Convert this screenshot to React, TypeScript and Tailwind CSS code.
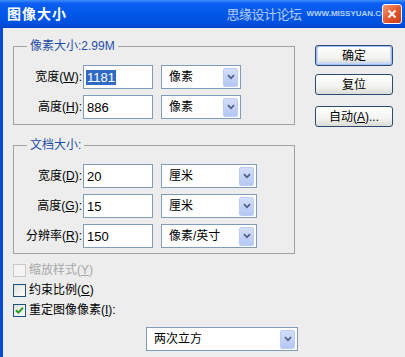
import React from 'react';

const font = "font-['Liberation_Sans','Noto_Sans_CJK_SC',sans-serif]";

interface SelectProps {
  value: string;
  width: string;
}

const Select: React.FC<SelectProps> = ({ value, width }) => (
  <div className={`${width} h-[24px] flex items-center bg-white border border-[#7f9db9] pl-[7px] pr-[2px]`}>
    <span className="flex-1 text-[12px] leading-none text-black">{value}</span>
    <span className="w-[15px] h-[19px] rounded-[2px] border border-[#bccdf5] bg-[linear-gradient(to_bottom,#d4defb,#b4c7f4)] flex items-center justify-center">
      <svg width="8" height="6" viewBox="0 0 8 6">
        <path d="M1 1.2 L4 4.3 L7 1.2" stroke="#4d6185" strokeWidth="1.7" fill="none" />
      </svg>
    </span>
  </div>
);

interface RowProps {
  name: string;
  hot: string;
  value: string;
  unit: string;
  selectWidth: string;
  selected?: boolean;
}

const Row: React.FC<RowProps> = ({ name, hot, value, unit, selectWidth, selected }) => (
  <div className="flex items-center h-[24px]">
    <div className="w-[68px] text-right text-[12px] text-black whitespace-nowrap">
      {name}(<u>{hot}</u>):
    </div>
    <div className="ml-px w-[70px] h-[24px] bg-white border border-[#7f9db9] flex items-center pl-[2px]">
      <span className={`text-[13px] leading-[15px] px-px ${selected ? 'bg-[#316ac5] text-white' : 'text-black'}`}>{value}</span>
    </div>
    <div className="ml-[8px]">
      <Select value={unit} width={selectWidth} />
    </div>
  </div>
);

const Group: React.FC<{ title: string; children: React.ReactNode; className?: string }> = ({ title, children, className }) => (
  <fieldset className={`border border-[#a3a3a3] pb-[5px] ${className ?? ''}`}>
    <legend className="ml-[13px] px-[3px] text-[12px] leading-[14px] text-[#1f4fa3]">{title}</legend>
    <div className="flex flex-col gap-[6px] pt-[12px]">{children}</div>
  </fieldset>
);

const Button: React.FC<{ children: React.ReactNode; primary?: boolean }> = ({ children, primary }) => (
  <div
    className={`w-[78px] h-[21px] rounded-[3px] border border-[#2b4a74] bg-[linear-gradient(to_bottom,#ffffff,#f3f3ef_60%,#dcdcd6)] flex items-center justify-center text-[12px] text-black ${
      primary ? 'shadow-[inset_0_0_0_1px_#9fc0f2,inset_0_-1px_0_2px_#c5d8f8]' : ''
    }`}
  >
    {children}
  </div>
);

const Check: React.FC<{ label: React.ReactNode; checked?: boolean; disabled?: boolean }> = ({ label, checked, disabled }) => (
  <div className="flex items-center h-[20px]">
    <span
      className={`w-[13px] h-[13px] border flex items-center justify-center ${
        disabled ? 'border-[#c9c9c9] bg-[#f4f4f4]' : 'border-[#1c5180] bg-[linear-gradient(135deg,#e0e0da,#ffffff)]'
      }`}
    >
      {checked && (
        <svg width="9" height="9" viewBox="0 0 9 9">
          <path d="M1 4.2 L3.4 6.6 L8 1.8" stroke="#21a121" strokeWidth="2" fill="none" />
        </svg>
      )}
    </span>
    <span className={`ml-[3px] text-[12px] ${disabled ? 'text-[#a8a8a8]' : 'text-black'}`}>{label}</span>
  </div>
);

export default function App() {
  return (
    <div className={`w-[405px] h-[357px] flex flex-col overflow-hidden bg-[#ededed] ${font}`}>
      {/* Title bar */}
      <div className="h-[28px] shrink-0 flex items-center bg-[linear-gradient(to_bottom,#3d8df7_0%,#0b5ff2_12%,#0057e8_50%,#0050de_85%,#0042c8_100%)]">
        <span className="ml-[7px] text-[14px] font-bold text-white tracking-[1px]">图像大小</span>
        <span className="ml-auto text-[13px] leading-none tracking-[-0.5px] text-[#a9c8fb] [text-shadow:0_0_1px_#3566c8]">思缘设计论坛</span>
        <span className="ml-[5px] text-[8px] font-bold leading-none text-[#b5d0ff] whitespace-nowrap">WWW.MISSYUAN.COM</span>
        <span className="shrink-0 ml-[-12px] mr-[3px] w-[20px] h-[20px] rounded-[3px] border border-white bg-[linear-gradient(135deg,#f29a76,#e2542a_55%,#c8401c)] flex items-center justify-center">
          <svg width="10" height="10" viewBox="0 0 10 10">
            <path d="M1.5 1.5 L8.5 8.5 M8.5 1.5 L1.5 8.5" stroke="white" strokeWidth="2" />
          </svg>
        </span>
      </div>

      {/* Body */}
      <div className="flex-1 flex border-l-[3px] border-[#0a4ad8]">
        <div className="ml-[10px] w-[282px] flex flex-col pt-[11px]">
          <Group title="像素大小:2.99M">
            <Row name="宽度" hot="W" value="1181" unit="像素" selectWidth="w-[80px]" selected />
            <Row name="高度" hot="H" value="886" unit="像素" selectWidth="w-[80px]" />
          </Group>

          <Group title="文档大小:" className="mt-[13px]">
            <Row name="宽度" hot="D" value="20" unit="厘米" selectWidth="w-[96px]" />
            <Row name="高度" hot="G" value="15" unit="厘米" selectWidth="w-[96px]" />
            <Row name="分辨率" hot="R" value="150" unit="像素/英寸" selectWidth="w-[96px]" />
          </Group>

          <div className="mt-[6px] flex flex-col">
            <Check disabled label={<>缩放样式(<u>Y</u>)</>} />
            <Check label={<>约束比例(<u>C</u>)</>} />
            <Check checked label={<>重定图像像素(<u>I</u>):</>} />
          </div>

          <div className="mt-[7px] ml-[133px]">
            <Select value="两次立方" width="w-[152px]" />
          </div>
        </div>

        <div className="ml-[20px] pt-[17px] flex flex-col">
          <Button primary>确定</Button>
          <div className="mt-[8px]">
            <Button>复位</Button>
          </div>
          <div className="mt-[11px]">
            <Button>
              自动(<u>A</u>)...
            </Button>
          </div>
        </div>
      </div>
    </div>
  );
}
